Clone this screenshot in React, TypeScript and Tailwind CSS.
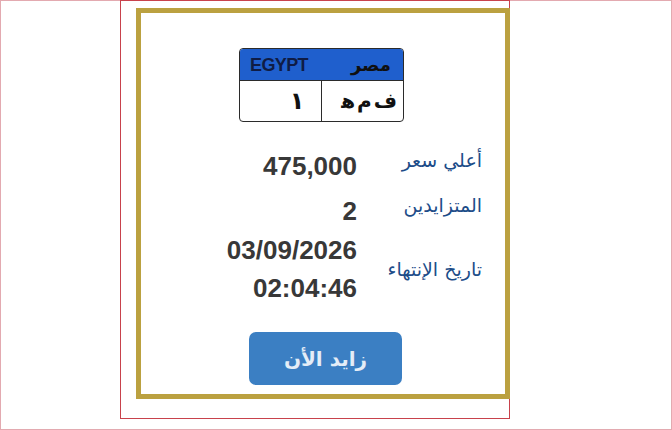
import React from 'react';

const rows = [
  { label: 'أعلي سعر', values: ['475,000'] },
  { label: 'المتزايدين', values: ['2'] },
];

export default function App() {
  return (
    <div className="w-[672px] h-[430px] border border-[#e3aab0] bg-white">
      {/* red frame */}
      <div className="-mt-px ml-[119px] w-[390px] h-[419px] border border-[#c8424c]">
        {/* gold card */}
        <div className="ml-[15px] mt-[7px] w-[374px] h-[391px] border-[5px] border-[#bba140] bg-white flex flex-col">
          {/* plate */}
          <div className="mt-[35px] ml-[98px] w-[165px] h-[74px] border border-[#2b2b2b] rounded-[4px] overflow-hidden flex flex-col">
            <div className="h-[32px] bg-[#1f5fcd] flex items-center justify-between pl-[10px] pr-[12px] border-b border-[#2b2b2b]">
              <span className="font-['Liberation_Sans',sans-serif] font-bold text-[18px] tracking-[-0.6px] text-[#0f1c45] leading-none">
                EGYPT
              </span>
              <span dir="rtl" className="font-['DejaVu_Sans',sans-serif] font-bold text-[18px] text-[#101010] leading-none">
                مصر
              </span>
            </div>
            <div className="flex-1 flex">
              <div dir="rtl" className="w-1/2 border-r border-[#2b2b2b] flex items-center pr-[16px] font-['DejaVu_Sans',sans-serif] font-bold text-[24px] text-[#111]">
                ١
              </div>
              <div className="w-1/2 flex items-center justify-end gap-[2px] pr-[6px] font-['DejaVu_Sans',sans-serif] font-bold text-[20px] text-[#111]">
                <span>ﻫ</span>
                <span>م</span>
                <span>ف</span>
              </div>
            </div>
          </div>

          {/* details */}
          <div dir="rtl" className="mt-[26px] pr-[23px] flex flex-col">
            {rows.map((r, i) => (
              <div key={r.label} className={`flex ${i === 0 ? 'h-[45px]' : 'h-[38px]'}`}>
                <div className="w-[125px] font-['DejaVu_Sans',sans-serif] text-[19px] leading-[24px] text-[#1c4c88]">
                  {r.label}
                </div>
                <div dir="ltr" className="text-right font-['Liberation_Sans',sans-serif] font-bold text-[26px] leading-[38px] text-[#383838] -mt-[1px]">
                  {r.values[0]}
                </div>
              </div>
            ))}
            <div className="flex items-center h-[76px]">
              <div className="w-[125px] font-['DejaVu_Sans',sans-serif] text-[19px] leading-[24px] text-[#1c4c88]">
                تاريخ الإنتهاء
              </div>
              <div dir="ltr" className="flex flex-col items-end font-['Liberation_Sans',sans-serif] font-bold text-[26px] leading-[38px] text-[#383838]">
                <span>03/09/2026</span>
                <span>02:04:46</span>
              </div>
            </div>
          </div>

          {/* bid button */}
          <button className="mt-[25px] ml-[108px] w-[153px] h-[53px] rounded-[7px] bg-[#3b7fc3] text-[#e4edf7] font-['DejaVu_Sans',sans-serif] font-bold text-[20px] flex items-center justify-center">
            <span dir="rtl">زايد الأن</span>
          </button>
        </div>
      </div>
    </div>
  );
}
